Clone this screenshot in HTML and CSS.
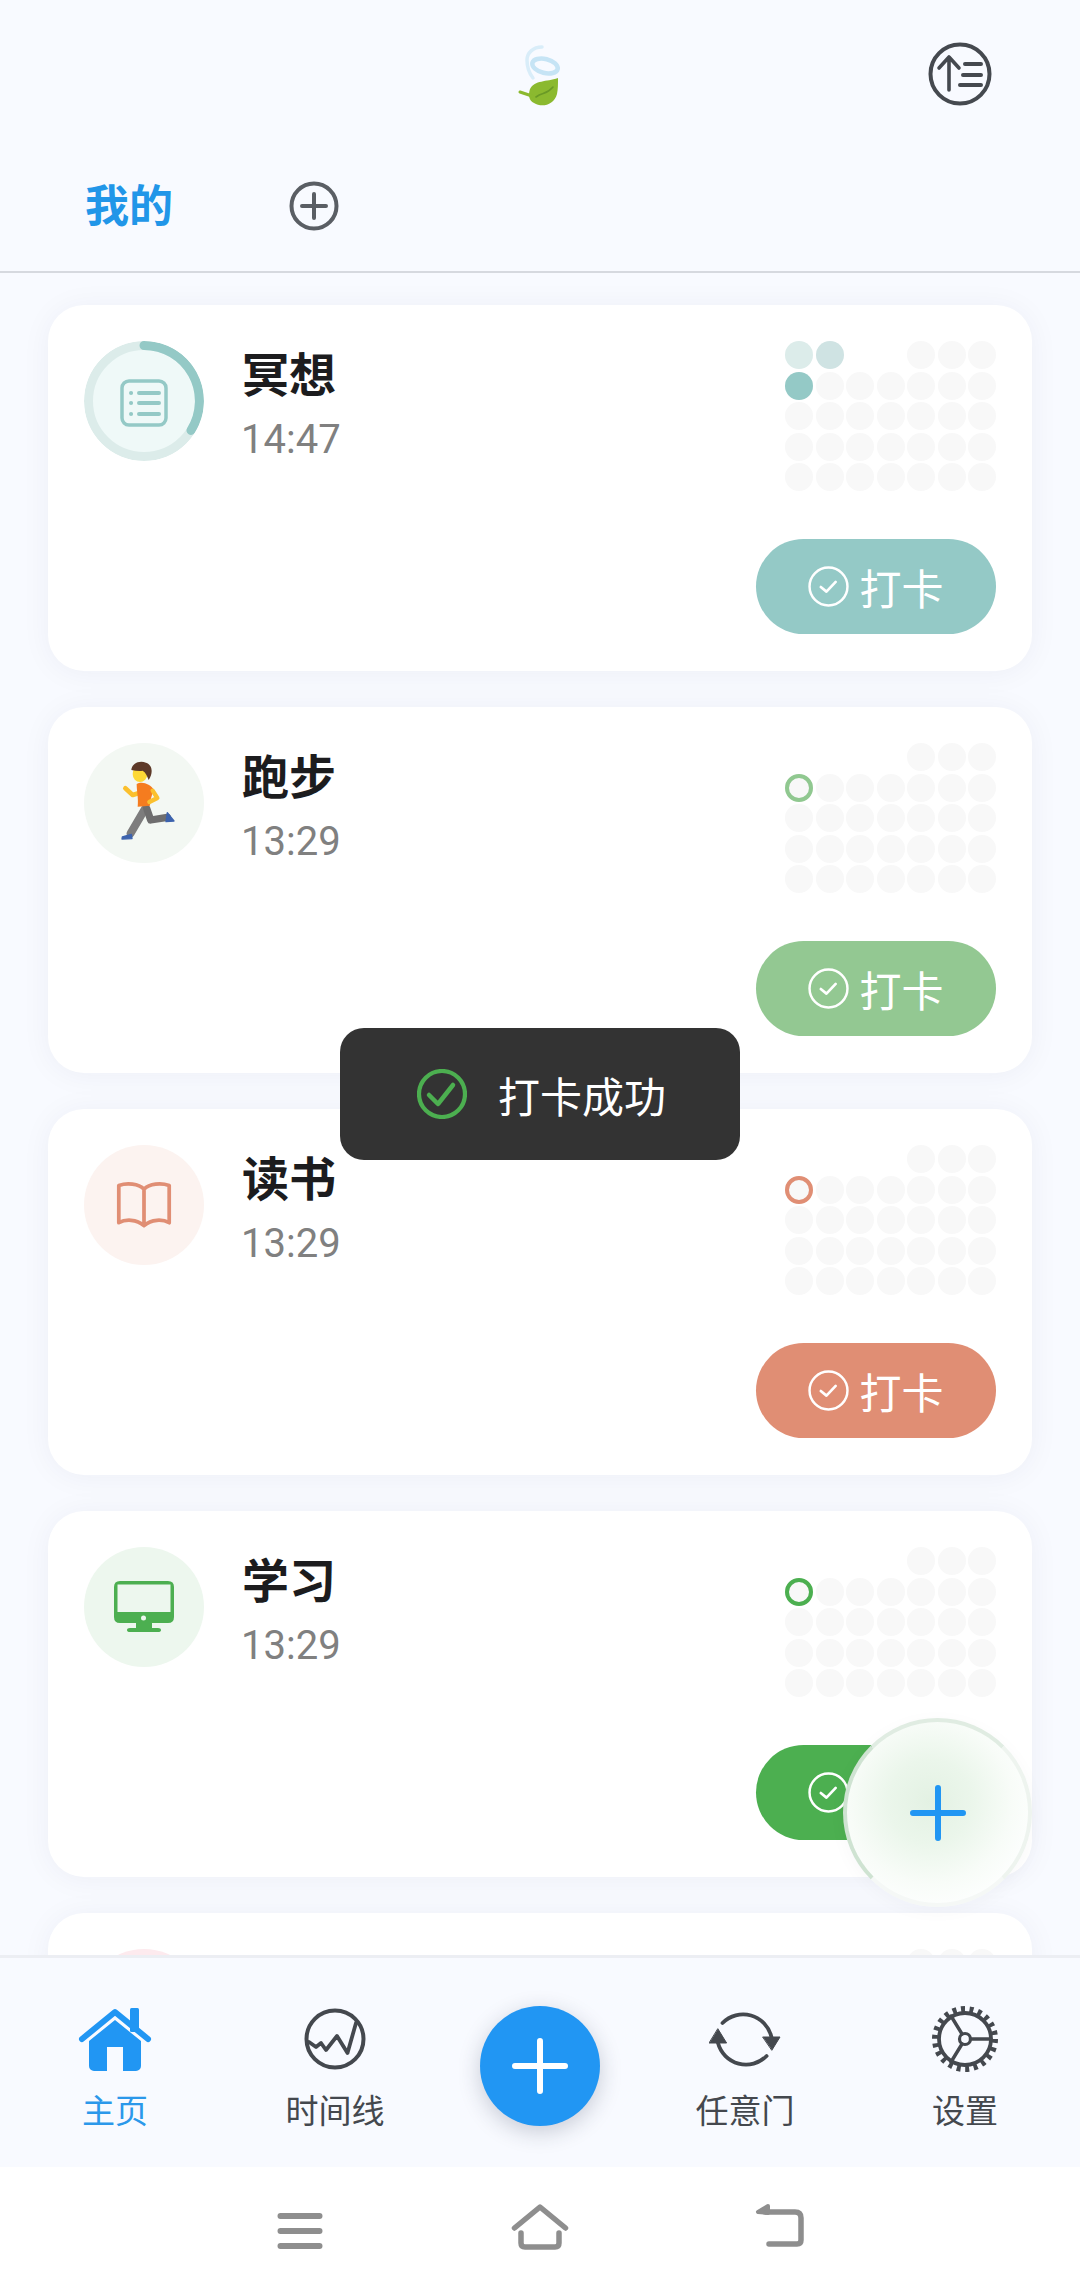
FILE: index.html
```html
<!DOCTYPE html>
<html lang="zh">
<head>
    <meta charset="UTF-8">
    <meta name="viewport" content="width=device-width, initial-scale=1.0">
    <title>打卡</title>
    <link rel="stylesheet" href="styles.css">
</head>
<body>
<div class="app">
    <header class="header">
        <div class="top-row">
            <span></span>
            <svg class="logo" width="60" height="80" viewBox="0 0 60 80" fill="none">
                <path d="M32 12C23 12 17 18 17 25C17 32 19 38 23 43" stroke="#d9edf9" stroke-width="3.5" stroke-linecap="round"/>
                <ellipse cx="35" cy="31" rx="13" ry="7" transform="rotate(14 35 31)" stroke="#c6e4f5" stroke-width="4.500"/>
                <path d="M48 43C36 47 25 45 20 54C18 60 19 66 24 68C32 73 44 70 47 59C48 54 48 49 48 43Z" fill="#8bb92f"/>
                <path d="M22 61L10 57" stroke="#8bb92f" stroke-width="3" stroke-linecap="round"/>
                <path d="M26 62C33 57 36 60 43 52" stroke="#6a9a26" stroke-width="1.600" stroke-linecap="round"/>
            </svg>
            <svg class="sort-btn" width="64" height="64" viewBox="0 0 64 64" fill="none" stroke="#45494f" stroke-linecap="round" stroke-linejoin="round">
                <circle cx="32" cy="32" r="29.500" stroke-width="4"/>
                <path d="M21 48V15M11 26L21 15L31 26" stroke-width="3.600"/>
                <path d="M37 22H53M35 33H53M32 43H53" stroke-width="4"/>
            </svg>
        </div>
        <div class="tab-row">
            <span class="tab-active">我的</span>
            <svg class="tab-add" width="50" height="50" viewBox="0 0 50 50" fill="none" stroke="#5a5e64">
                <circle cx="25" cy="25" r="22.500" stroke-width="4"/>
                <path d="M13 25H37M25 13V37" stroke-width="4" stroke-linecap="round"/>
            </svg>
        </div>
    </header>

    <main class="list">
        <section class="card">
            <div class="card-top">
                <svg class="habit-icon" width="120" height="120" viewBox="0 0 120 120" fill="none">
                    <circle cx="60" cy="60" r="55.500" fill="#eff9f8" stroke="#dcecea" stroke-width="9"/>
                    <path d="M60 4.500A55.500 55.500 0 0 1 107 89.400" stroke="#94c9c6" stroke-width="9" stroke-linecap="round"/>
                    <rect x="38" y="40" width="44" height="44" rx="7" stroke="#94c9c6" stroke-width="3.500"/>
                    <path d="M55 52H75M55 62H75M55 73H75" stroke="#94c9c6" stroke-width="4" stroke-linecap="round"/>
                    <path d="M47 52H47.100M47 62H47.100M47 73H47.100" stroke="#94c9c6" stroke-width="4" stroke-linecap="round"/>
                </svg>
                <div class="info">
                    <div class="name">冥想</div>
                    <div class="time">14:47</div>
                </div>
                <div class="dots">
                    <i class="d-teal-1"></i><i class="d-teal-2"></i><i class="d-none"></i><i class="d-none"></i><i></i><i></i><i></i>
                    <i class="d-teal"></i><i></i><i></i><i></i><i></i><i></i><i></i>
                    <i></i><i></i><i></i><i></i><i></i><i></i><i></i>
                    <i></i><i></i><i></i><i></i><i></i><i></i><i></i>
                    <i></i><i></i><i></i><i></i><i></i><i></i><i></i>
                </div>
            </div>
            <div class="check-btn btn-teal">
                <svg width="41" height="41" viewBox="0 0 40 40" fill="none" stroke="#fff" stroke-linecap="round" stroke-linejoin="round">
                    <circle cx="20" cy="20" r="18.500" stroke-width="2.400"/>
                    <path d="M12.500 20.500L18 25L27 15.500" stroke-width="2.600"/>
                </svg>
                <span>打卡</span>
            </div>
        </section>

        <section class="card">
            <div class="card-top">
                <div class="habit-icon bg-run">
                    <svg width="120" height="120" viewBox="0 0 360 360" fill="none">
                        <g transform="translate(18 -9)" stroke-linecap="round" stroke-linejoin="round">
                            <path d="M166 205L122 280" stroke="#7d7d7d" stroke-width="24"/>
                            <path d="M170 205L182 240L232 232" stroke="#6e6e6e" stroke-width="22"/>
                            <path d="M97 291L124 283L126 296L96 297Z" fill="#3c63ad" stroke="#3c63ad" stroke-width="4"/>
                            <path d="M232 218L252 243L228 245Z" fill="#3c63ad" stroke="#3c63ad" stroke-width="4"/>
                            <path d="M106 145L128 165L150 158" stroke="#fbc02d" stroke-width="14"/>
                            <path d="M140 132C155 122 182 132 192 150C184 168 180 182 180 197L143 200C146 175 140 155 140 132Z" fill="#f57c1f"/>
                            <path d="M188 152L202 174L178 186" stroke="#fbc02d" stroke-width="13"/>
                            <ellipse cx="150" cy="102" rx="22" ry="24" fill="#fdd835"/>
                            <path d="M124 90C126 70 148 60 168 68C188 74 190 100 176 120C172 110 168 98 158 92C148 94 136 92 124 90Z" fill="#5d3a28"/>
                        </g>
                    </svg>
                </div>
                <div class="info">
                    <div class="name">跑步</div>
                    <div class="time">13:29</div>
                </div>
                <div class="dots">
                    <i class="d-none"></i><i class="d-none"></i><i class="d-none"></i><i class="d-none"></i><i></i><i></i><i></i>
                    <i class="d-ring ring-run"></i><i></i><i></i><i></i><i></i><i></i><i></i>
                    <i></i><i></i><i></i><i></i><i></i><i></i><i></i>
                    <i></i><i></i><i></i><i></i><i></i><i></i><i></i>
                    <i></i><i></i><i></i><i></i><i></i><i></i><i></i>
                </div>
            </div>
            <div class="check-btn btn-run">
                <svg width="41" height="41" viewBox="0 0 40 40" fill="none" stroke="#fff" stroke-linecap="round" stroke-linejoin="round">
                    <circle cx="20" cy="20" r="18.500" stroke-width="2.400"/>
                    <path d="M12.500 20.500L18 25L27 15.500" stroke-width="2.600"/>
                </svg>
                <span>打卡</span>
            </div>
        </section>

        <section class="card">
            <div class="card-top">
                <div class="habit-icon bg-read">
                    <svg width="56" height="50" viewBox="0 0 60 52" fill="none" stroke="#e08e74" stroke-width="4" stroke-linejoin="round">
                        <path d="M30 9C24 3 12 2 3 5V45C10 41 22 41 30 48C38 41 50 41 57 45V5C48 2 36 3 30 9ZM30 9V48"/>
                    </svg>
                </div>
                <div class="info">
                    <div class="name">读书</div>
                    <div class="time">13:29</div>
                </div>
                <div class="dots">
                    <i class="d-none"></i><i class="d-none"></i><i class="d-none"></i><i class="d-none"></i><i></i><i></i><i></i>
                    <i class="d-ring ring-read"></i><i></i><i></i><i></i><i></i><i></i><i></i>
                    <i></i><i></i><i></i><i></i><i></i><i></i><i></i>
                    <i></i><i></i><i></i><i></i><i></i><i></i><i></i>
                    <i></i><i></i><i></i><i></i><i></i><i></i><i></i>
                </div>
            </div>
            <div class="check-btn btn-read">
                <svg width="41" height="41" viewBox="0 0 40 40" fill="none" stroke="#fff" stroke-linecap="round" stroke-linejoin="round">
                    <circle cx="20" cy="20" r="18.500" stroke-width="2.400"/>
                    <path d="M12.500 20.500L18 25L27 15.500" stroke-width="2.600"/>
                </svg>
                <span>打卡</span>
            </div>
        </section>

        <section class="card">
            <div class="card-top">
                <div class="habit-icon bg-study">
                    <svg width="60" height="52" viewBox="0 0 60 52">
                        <path fill-rule="evenodd" fill="#4caf50" d="M6 0H54Q60 0 60 6V36Q60 42 54 42H38V47H44Q47 47 47 49Q47 51 44 51H16Q13 51 13 49Q13 47 16 47H22V42H6Q0 42 0 36V6Q0 0 6 0ZM3.500 3.500V31H56.500V3.500Z"/>
                        <circle cx="29.500" cy="37" r="2.500" fill="#edf7ee"/>
                    </svg>
                </div>
                <div class="info">
                    <div class="name">学习</div>
                    <div class="time">13:29</div>
                </div>
                <div class="dots">
                    <i class="d-none"></i><i class="d-none"></i><i class="d-none"></i><i class="d-none"></i><i></i><i></i><i></i>
                    <i class="d-ring ring-study"></i><i></i><i></i><i></i><i></i><i></i><i></i>
                    <i></i><i></i><i></i><i></i><i></i><i></i><i></i>
                    <i></i><i></i><i></i><i></i><i></i><i></i><i></i>
                    <i></i><i></i><i></i><i></i><i></i><i></i><i></i>
                </div>
            </div>
            <div class="check-btn btn-study">
                <svg width="41" height="41" viewBox="0 0 40 40" fill="none" stroke="#fff" stroke-linecap="round" stroke-linejoin="round">
                    <circle cx="20" cy="20" r="18.500" stroke-width="2.400"/>
                    <path d="M12.500 20.500L18 25L27 15.500" stroke-width="2.600"/>
                </svg>
                <span>打卡</span>
            </div>
        </section>

        <!-- fifth card is cut off by the tab bar -->
        <section class="card">
            <div class="card-top">
                <div class="habit-icon bg-pink"></div>
                <div class="info"></div>
                <div class="dots">
                    <i class="d-none"></i><i class="d-none"></i><i class="d-none"></i><i class="d-none"></i><i></i><i></i><i></i>
                </div>
            </div>
        </section>
    </main>

    <nav class="tabbar">
        <div class="tab-item tab-on">
            <svg width="74" height="66" viewBox="0 0 74 66" fill="#2196f3">
                <rect x="52" y="2" width="9" height="24" rx="1.500"/>
                <path d="M4 33L37 6L70 33" fill="none" stroke="#2196f3" stroke-width="6" stroke-linecap="round" stroke-linejoin="round"/>
                <path d="M37 14L11 35V60A5 5 0 0 0 16 65H29V41H45V65H58A5 5 0 0 0 63 60V35Z"/>
            </svg>
            <span>主页</span>
        </div>
        <div class="tab-item">
            <svg width="62" height="66" viewBox="0 -2 62 66" fill="none" stroke="#44484e" stroke-linecap="round" stroke-linejoin="round">
                <circle cx="31" cy="31" r="28.500" stroke-width="4"/>
                <path d="M5 34L12 39L17 35L22 42L33 28L43.500 45L52 15" stroke-width="3.800"/>
            </svg>
            <span>时间线</span>
        </div>
        <div class="add-wrap">
            <div class="add-btn">
                <svg width="56" height="56" viewBox="0 0 56 56" stroke="#fff" stroke-width="6" stroke-linecap="round">
                    <path d="M3 28H53M28 3V53"/>
                </svg>
            </div>
        </div>
        <div class="tab-item">
            <svg width="72" height="66" viewBox="0 -2 72 66" fill="none" stroke="#44484e" stroke-width="3.800" stroke-linecap="round">
                <path d="M13.500 15A29 29 0 0 1 62.400 29"/>
                <path d="M9 35A29 29 0 0 0 57.600 48"/>
                <path d="M54 29H71L63 42Z" fill="#44484e" stroke-width="1" stroke-linejoin="round"/>
                <path d="M0.400 35H17.600L9 21Z" fill="#44484e" stroke-width="1" stroke-linejoin="round"/>
            </svg>
            <span>任意门</span>
        </div>
        <div class="tab-item">
            <svg width="68" height="66" viewBox="0 0 68 66" fill="none" stroke="#44484e" stroke-linecap="round">
                <circle cx="34" cy="33" r="30" stroke-width="6" stroke-dasharray="4 4.570" stroke-linecap="butt"/>
                <circle cx="34" cy="33" r="26" stroke-width="3.800"/>
                <circle cx="34" cy="33" r="5.500" stroke-width="3.200"/>
                <path d="M39.500 33H60M31 28L20 10M31 38L20 56" stroke-width="3.400"/>
            </svg>
            <span>设置</span>
        </div>
    </nav>

    <div class="sysnav">
        <svg width="64" height="54" viewBox="0 0 64 54" stroke="#8e8e8e" stroke-width="6" stroke-linecap="round">
            <path d="M12.500 16H51.500M12.500 31H51.500M12.500 46H51.500"/>
        </svg>
        <svg width="64" height="54" viewBox="0 0 64 54" fill="none" stroke="#8e8e8e" stroke-width="5.500" stroke-linecap="round" stroke-linejoin="round">
            <path d="M6.500 28L32 7L57.500 28"/>
            <path d="M13 33V43Q13 47 17 47H47Q51 47 51 43V33"/>
        </svg>
        <svg width="64" height="54" viewBox="-4 0 64 54" fill="none" stroke="#8e8e8e" stroke-width="5.500" stroke-linecap="round" stroke-linejoin="round">
            <path d="M14 12H43Q49 12 49 18V40Q49 44 45 44H17"/>
            <path d="M16 6L6 12L16 13Z" fill="#8e8e8e" stroke-width="4"/>
        </svg>
    </div>

    <div class="toast">
        <svg width="50" height="50" viewBox="0 0 50 50" fill="none" stroke="#4caf50" stroke-linecap="round" stroke-linejoin="round">
            <circle cx="25" cy="25" r="23" stroke-width="4.200"/>
            <path d="M12 26L21 35L36 16" stroke-width="4.500"/>
        </svg>
        <span>打卡成功</span>
    </div>

    <div class="float-btn">
        <svg width="56" height="56" viewBox="0 0 56 56" stroke="#2196f3" stroke-width="6" stroke-linecap="round">
            <path d="M3 28H53M28 3V53"/>
        </svg>
    </div>
</div>
</body>
</html>
```

FILE: styles.css
```css
* {
    box-sizing: border-box;
}
body {
    margin: 0;
    font-family: Roboto, "Noto Sans CJK SC", sans-serif;
    background-color: #f8faff;
}
svg {
    display: block;
}
.app {
    position: relative;
    width: 1080px;
    height: 2294px;
    display: flex;
    flex-direction: column;
    overflow: hidden;
    background: #f8faff;
}

/* header */
.header {
    flex-shrink: 0;
    height: 273px;
    border-bottom: 2px solid #d6d9df;
}
.top-row {
    height: 150px;
    display: grid;
    grid-template-columns: 1fr 60px 1fr;
    align-items: start;
}
.logo {
    margin-top: 35px;
}
.sort-btn {
    justify-self: end;
    margin-top: 42px;
    margin-right: 88px;
}
.tab-row {
    height: 111px;
    display: flex;
    align-items: center;
    padding-left: 85px;
    gap: 116px;
}
.tab-active {
    font-size: 44px;
    line-height: 50px;
    margin-top: 3px;
    font-weight: 700;
    color: #2196e8;
}

/* habit list */
.list {
    flex: 1;
    min-height: 0;
    overflow: hidden;
    display: flex;
    flex-direction: column;
    gap: 36px;
    padding: 32px 48px 0;
}
.card {
    flex-shrink: 0;
    height: 366px;
    padding: 36px 36px 37px;
    display: flex;
    flex-direction: column;
    background: #fff;
    border-radius: 36px;
    box-shadow: 0 2px 30px rgba(30, 40, 70, 0.05);
}
.card-top {
    display: flex;
    align-items: flex-start;
}
.habit-icon {
    flex-shrink: 0;
    width: 120px;
    height: 120px;
    border-radius: 50%;
    display: flex;
    align-items: center;
    justify-content: center;
}
.bg-run {
    background: #f3f8f3;
}
.bg-read {
    background: #fcf3f0;
}
.bg-study {
    background: #edf7ee;
}
.bg-pink {
    background: #fdeaee;
}
.info {
    flex: 1;
    padding: 5px 0 0 38px;
}
.name {
    font-size: 47px;
    line-height: 60px;
    font-weight: 700;
    color: #1c1c1e;
}
.time {
    margin-top: 10px;
    margin-left: -1px;
    font-size: 40px;
    line-height: 48px;
    color: #808080;
}

/* month dots */
.dots {
    display: grid;
    grid-template-columns: repeat(7, 28px);
    grid-auto-rows: 28px;
    gap: 2.5px;
}
.dots i {
    border-radius: 50%;
    background: #f8f8f8;
}
.dots .d-none {
    background: transparent;
}
.dots .d-teal-1 {
    background: #dcecea;
}
.dots .d-teal-2 {
    background: #cfe3e3;
}
.dots .d-teal {
    background: #94c9c6;
}
.dots .d-ring {
    border: 4px solid;
}
.ring-run {
    border-color: #90c890 !important;
}
.ring-read {
    border-color: #e08e74 !important;
}
.ring-study {
    border-color: #4caf50 !important;
}

/* check-in button */
.check-btn {
    margin-top: auto;
    align-self: flex-end;
    width: 240px;
    height: 95px;
    border-radius: 48px;
    display: flex;
    align-items: center;
    justify-content: center;
    gap: 10px;
    font-size: 42px;
    color: #fff;
}
.btn-teal {
    background: #94c9c6;
}
.btn-run {
    background: #93c892;
}
.btn-read {
    background: #e08e74;
}
.btn-study {
    background: #4caf50;
}

/* bottom tabs */
.tabbar {
    position: relative;
    flex-shrink: 0;
    height: 212px;
    display: grid;
    grid-template-columns: 220px 220px 190px 220px 220px;
    padding: 48px 5px 0;
    background: #f8faff;
    border-top: 3px solid #eceef3;
}
.tab-item {
    display: flex;
    flex-direction: column;
    align-items: center;
    gap: 20px;
    font-size: 33px;
    line-height: 40px;
    color: #44484e;
}
.tab-on {
    color: #2b98ea;
}
.add-wrap {
    display: flex;
    justify-content: center;
}
.add-btn {
    width: 120px;
    height: 120px;
    border-radius: 50%;
    display: flex;
    align-items: center;
    justify-content: center;
    background: #2196f3;
    box-shadow: 0 6px 22px rgba(30, 40, 70, 0.22);
}

/* system nav bar */
.sysnav {
    flex-shrink: 0;
    height: 127px;
    display: grid;
    grid-template-columns: repeat(3, 240px);
    justify-content: center;
    justify-items: center;
    padding-top: 33px;
    background: #fff;
}

/* overlays */
.toast {
    position: absolute;
    left: 340px;
    top: 1028px;
    width: 400px;
    height: 132px;
    padding-left: 77px;
    display: flex;
    align-items: center;
    gap: 31px;
    border-radius: 24px;
    background: #333;
    font-size: 42px;
    color: #fff;
}
.float-btn {
    position: absolute;
    left: 843px;
    top: 1718px;
    width: 189px;
    height: 189px;
    border-radius: 50%;
    display: flex;
    align-items: center;
    justify-content: center;
    background: radial-gradient(circle at 46% 44%, #e3f1e3 0%, #ebf6eb 30%, #f8fcf8 58%, #feffff 80%);
    border: 4px solid;
    border-color: #e0ece2 #eef4ef #f5f8f6 #cfe3d2;
    box-shadow: 0 4px 18px rgba(30, 40, 70, 0.03);
}
```
